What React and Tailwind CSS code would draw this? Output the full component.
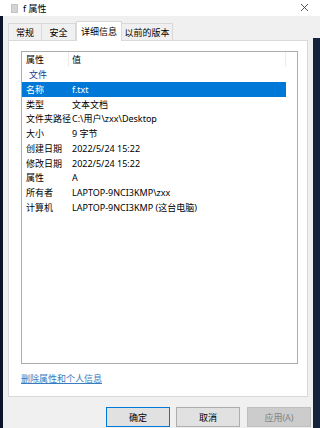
import React from 'react';

const ROWS = [
  ['名称', 'f.txt'],
  ['类型', '文本文档'],
  ['文件夹路径', 'C:\\用户\\zxx\\Desktop'],
  ['大小', '9 字节'],
  ['创建日期', '2022/5/24 15:22'],
  ['修改日期', '2022/5/24 15:22'],
  ['属性', 'A'],
  ['所有者', 'LAPTOP-9NCI3KMP\\zxx'],
  ['计算机', 'LAPTOP-9NCI3KMP (这台电脑)'],
];

const TABS = [
  { label: '常规', w: 'w-[34px]' },
  { label: '安全', w: 'w-[35px]' },
  { label: '详细信息', w: 'w-[46px]', active: true },
  { label: '以前的版本', w: 'w-[52px]' },
];

const TitleBar = () => (
  <div className="h-[16px] bg-white flex items-center relative shrink-0">
    <div className="ml-[11px] w-[7px] h-[9px] bg-[#d4d4d4] border border-[#c4c4c4]" />
    <span className="ml-[5px] text-[9px] leading-none text-black">f 属性</span>
    <svg className="absolute right-[11px] top-[3px]" width="9" height="9" viewBox="0 0 9 9">
      <path d="M1 1 L8 8 M8 1 L1 8" stroke="#444" strokeWidth="0.9" fill="none" />
    </svg>
  </div>
);

const Tabs = () => (
  <div className="flex items-end h-[24px] pl-[5px] pt-[5px] shrink-0">
    {TABS.map((t) =>
      t.active ? (
        <div
          key={t.label}
          className={`${t.w} h-[20px] bg-white border border-b-0 border-[#d9d9d9] flex items-center justify-center text-[9px] leading-none text-black relative top-[1px] z-10`}
        >
          {t.label}
        </div>
      ) : (
        <div
          key={t.label}
          className={`${t.w} h-[17px] bg-[#f0f0f0] border border-b-0 border-[#d9d9d9] -ml-px first:ml-0 flex items-center justify-center text-[9px] leading-none text-black whitespace-nowrap overflow-hidden`}
        >
          {t.label}
        </div>
      )
    )}
  </div>
);

const DetailList = () => (
  <div className="ml-[12px] mt-[10px] w-[277px] h-[313px] border border-[#adadad] bg-white flex flex-col">
    <div className="h-[15px] flex items-center text-[9px] leading-none text-black shrink-0">
      <div className="w-[47px] h-full pl-[4px] flex items-center border-r border-[#ececec]">属性</div>
      <div className="w-[217px] h-full pl-[3px] flex items-center border-r border-[#ececec]">值</div>
    </div>
    <div className="h-[15px] flex items-center pl-[7px] text-[9px] leading-none text-[#1b3a8c] shrink-0">文件</div>
    {ROWS.map(([k, v], i) => (
      <div
        key={k}
        className={`h-[14.75px] w-[264px] flex items-center text-[9px] leading-none shrink-0 ${
          i === 0 ? 'bg-[#0078d7] text-white' : 'text-black'
        }`}
      >
        <div className="w-[47px] pl-[4px] whitespace-nowrap">{k}</div>
        <div className="pl-[3px] whitespace-nowrap">{v}</div>
      </div>
    ))}
  </div>
);

const Buttons = () => (
  <div className="flex justify-end gap-[6px] pr-[2px] pt-[10px] text-[9px] leading-none">
    <div className="w-[64px] h-[20px] bg-[#e1e1e1] border border-[#0078d7] flex items-center justify-center text-black">
      确定
    </div>
    <div className="w-[64px] h-[20px] bg-[#e1e1e1] border border-[#adadad] flex items-center justify-center text-black">
      取消
    </div>
    <div className="ml-px w-[64px] h-[20px] bg-[#cccccc] border border-[#bfbfbf] flex items-center justify-center text-[#838383]">
      应用(A)
    </div>
  </div>
);

export default function App() {
  return (
    <div className="w-[320px] h-[428px] flex flex-col bg-white overflow-hidden font-['Noto_Sans','Noto_Sans_CJK_SC',sans-serif]">
      <TitleBar />
      <div className="flex flex-1">
        <div className="w-[3px] bg-[#0c1628]" />
        <div className="w-[310px] bg-[#f0f0f0] flex flex-col">
          <Tabs />
          <div className="mx-[5px] h-[357px] bg-white border border-[#d9d9d9] flex flex-col shrink-0">
            <DetailList />
            <div className="ml-[12px] mt-[10px] text-[9px] leading-none text-[#3a7bc0] underline">
              删除属性和个人信息
            </div>
          </div>
          <Buttons />
        </div>
        <div className="w-[7px] flex flex-col">
          <div className="h-[22px] bg-[#f0f0f0]" />
          <div className="flex-1 bg-[#15233d]" />
        </div>
      </div>
    </div>
  );
}
